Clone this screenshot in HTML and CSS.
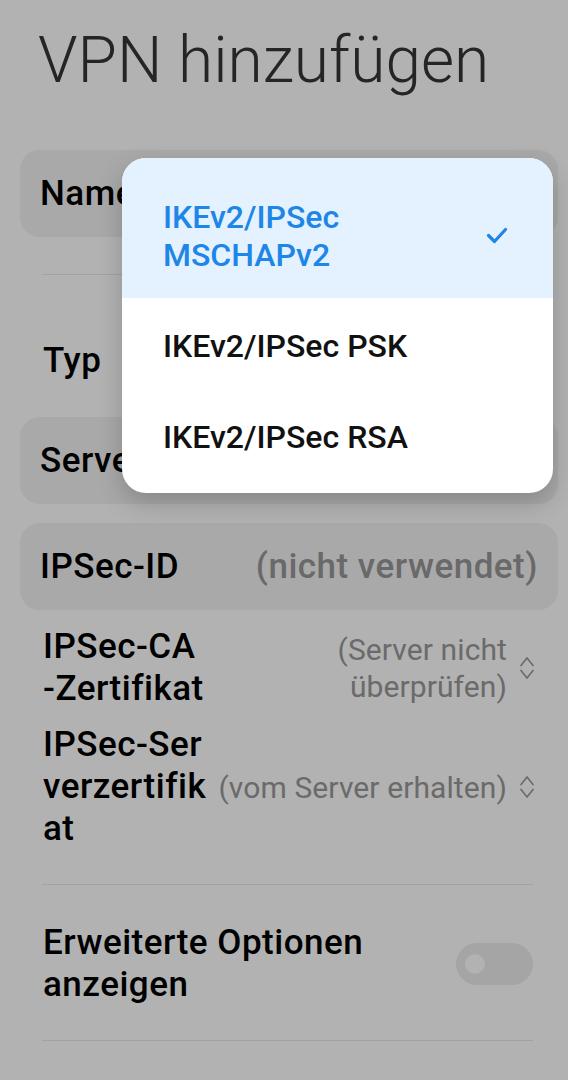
FILE: index.html
```html
<!DOCTYPE html>
<html lang="de">
<head>
<meta charset="utf-8">
<title>VPN hinzufügen</title>
<link rel="stylesheet" href="styles.css">
</head>
<body>
<div class="screen">
  <h1 class="title">VPN hinzufügen</h1>

  <div class="card card-name">
    <span class="label">Name</span>
  </div>

  <div class="divider divider-top"></div>

  <div class="row row-typ">
    <span class="label">Typ</span>
  </div>

  <div class="card card-server">
    <span class="label">Server</span>
  </div>

  <div class="card card-id">
    <span class="label">IPSec-ID</span>
    <span class="card-value">(nicht verwendet)</span>
  </div>

  <div class="row row-ca">
    <span class="label">IPSec-CA<br>-Zertifikat</span>
    <span class="value">(Server nicht<br>überprüfen)</span>
    <svg class="chevron" width="16" height="26" viewBox="0 0 16 26"><path d="M2 10.5 L8 3 L14 10.5 M2 15.5 L8 23 L14 15.5"/></svg>
  </div>

  <div class="row row-ser">
    <span class="label">IPSec-Ser<br>verzertifik<br>at</span>
    <span class="value">(vom Server erhalten)</span>
    <svg class="chevron" width="16" height="26" viewBox="0 0 16 26"><path d="M2 10.5 L8 3 L14 10.5 M2 15.5 L8 23 L14 15.5"/></svg>
  </div>

  <div class="divider divider-mid"></div>

  <div class="row row-adv">
    <span class="label label-adv">Erweiterte Optionen anzeigen</span>
    <span class="toggle"><span class="knob"></span></span>
  </div>

  <div class="divider divider-bottom"></div>

  <div class="overlay"></div>

  <div class="popup">
    <div class="item item-selected">
      <span class="item-text">IKEv2/IPSec<br>MSCHAPv2</span>
      <svg class="check" width="24" height="20" viewBox="0 0 24 20"><path d="M3.5 9.5 L9.5 15.5 L20.5 3.5"/></svg>
    </div>
    <div class="item"><span class="item-text">IKEv2/IPSec PSK</span></div>
    <div class="item"><span class="item-text">IKEv2/IPSec RSA</span></div>
  </div>
</div>
</body>
</html>
```

FILE: styles.css
```css
* {
  box-sizing: border-box;
}

html, body {
  margin: 0;
  padding: 0;
}

body {
  font-family: Roboto, "Noto Sans", "Liberation Sans", sans-serif;
  background: #ffffff;
}

.screen {
  position: relative;
  width: 568px;
  height: 1080px;
  overflow: hidden;
  background: #ffffff;
  display: flex;
  flex-direction: column;
}

.title {
  margin: 0;
  padding: 25px 0 0 38px;
  font-weight: 300;
  font-size: 64px;
  line-height: 72px;
  color: #353535;
  letter-spacing: 0;
}

.label {
  font-weight: 500;
  font-size: 35px;
  line-height: 42px;
  letter-spacing: 0.5px;
  color: #000000;
}

.card {
  display: flex;
  align-items: center;
  height: 87px;
  margin: 0 10px 0 20px;
  padding: 0 20px 0 20px;
  border-radius: 20px;
  background: #f2f2f2;
}

.card-name {
  margin-top: 53px;
}

.card-server {
  margin-top: 0;
}

.card-id {
  margin-top: 19px;
  justify-content: space-between;
}

.card-value {
  font-weight: 500;
  font-size: 35px;
  line-height: 42px;
  letter-spacing: 0.5px;
  color: #979797;
}

.divider {
  height: 1px;
  margin: 0 35px 0 42px;
  background: #e9e9e9;
}

.divider-top {
  margin-top: 37px;
}

.divider-mid {
  margin-top: 34px;
}

.divider-bottom {
  margin-top: 34px;
}

.row {
  display: flex;
  align-items: center;
  padding: 0 33px 0 43px;
}

.row-typ {
  padding-top: 65px;
  padding-bottom: 35px;
}

.row-ca {
  margin-top: 16px;
}

.row-ser {
  margin-top: 14px;
}

.value {
  margin-left: auto;
  font-weight: 400;
  font-size: 30px;
  line-height: 37px;
  letter-spacing: 0.1px;
  color: #999999;
  text-align: right;
}

.chevron {
  flex: none;
  margin-left: 12px;
  fill: none;
  stroke: #9c9c9c;
  stroke-width: 1.7;
  stroke-linecap: round;
  stroke-linejoin: round;
}

.row-adv {
  margin-top: 37px;
  padding-right: 35px;
}

.label-adv {
  flex: 1;
  margin-right: 60px;
}

.toggle {
  flex: none;
  position: relative;
  width: 77px;
  height: 42px;
  border-radius: 21px;
  background: #ececec;
}

.knob {
  position: absolute;
  left: 9px;
  top: 11px;
  width: 20px;
  height: 20px;
  border-radius: 50%;
  background: #ffffff;
}

.overlay {
  position: absolute;
  inset: 0;
  background: rgba(0, 0, 0, 0.3);
}

.popup {
  position: absolute;
  left: 122px;
  top: 158px;
  width: 431px;
  height: 335px;
  border-radius: 24px;
  background: #ffffff;
  overflow: hidden;
  box-shadow: 0 10px 26px rgba(0, 0, 0, 0.2);
}

.item {
  display: flex;
  align-items: center;
  padding: 29px 44px 24px 41px;
}

.item-selected {
  padding-top: 40px;
  padding-bottom: 24px;
  background: #e4f1fe;
}

.item-text {
  font-weight: 500;
  font-size: 32px;
  line-height: 38px;
  color: #111111;
}

.item-selected .item-text {
  color: #1e86e6;
}

.check {
  flex: none;
  margin-left: auto;
  fill: none;
  stroke: #1e86e6;
  stroke-width: 3.2;
  stroke-linecap: round;
  stroke-linejoin: round;
}
```
